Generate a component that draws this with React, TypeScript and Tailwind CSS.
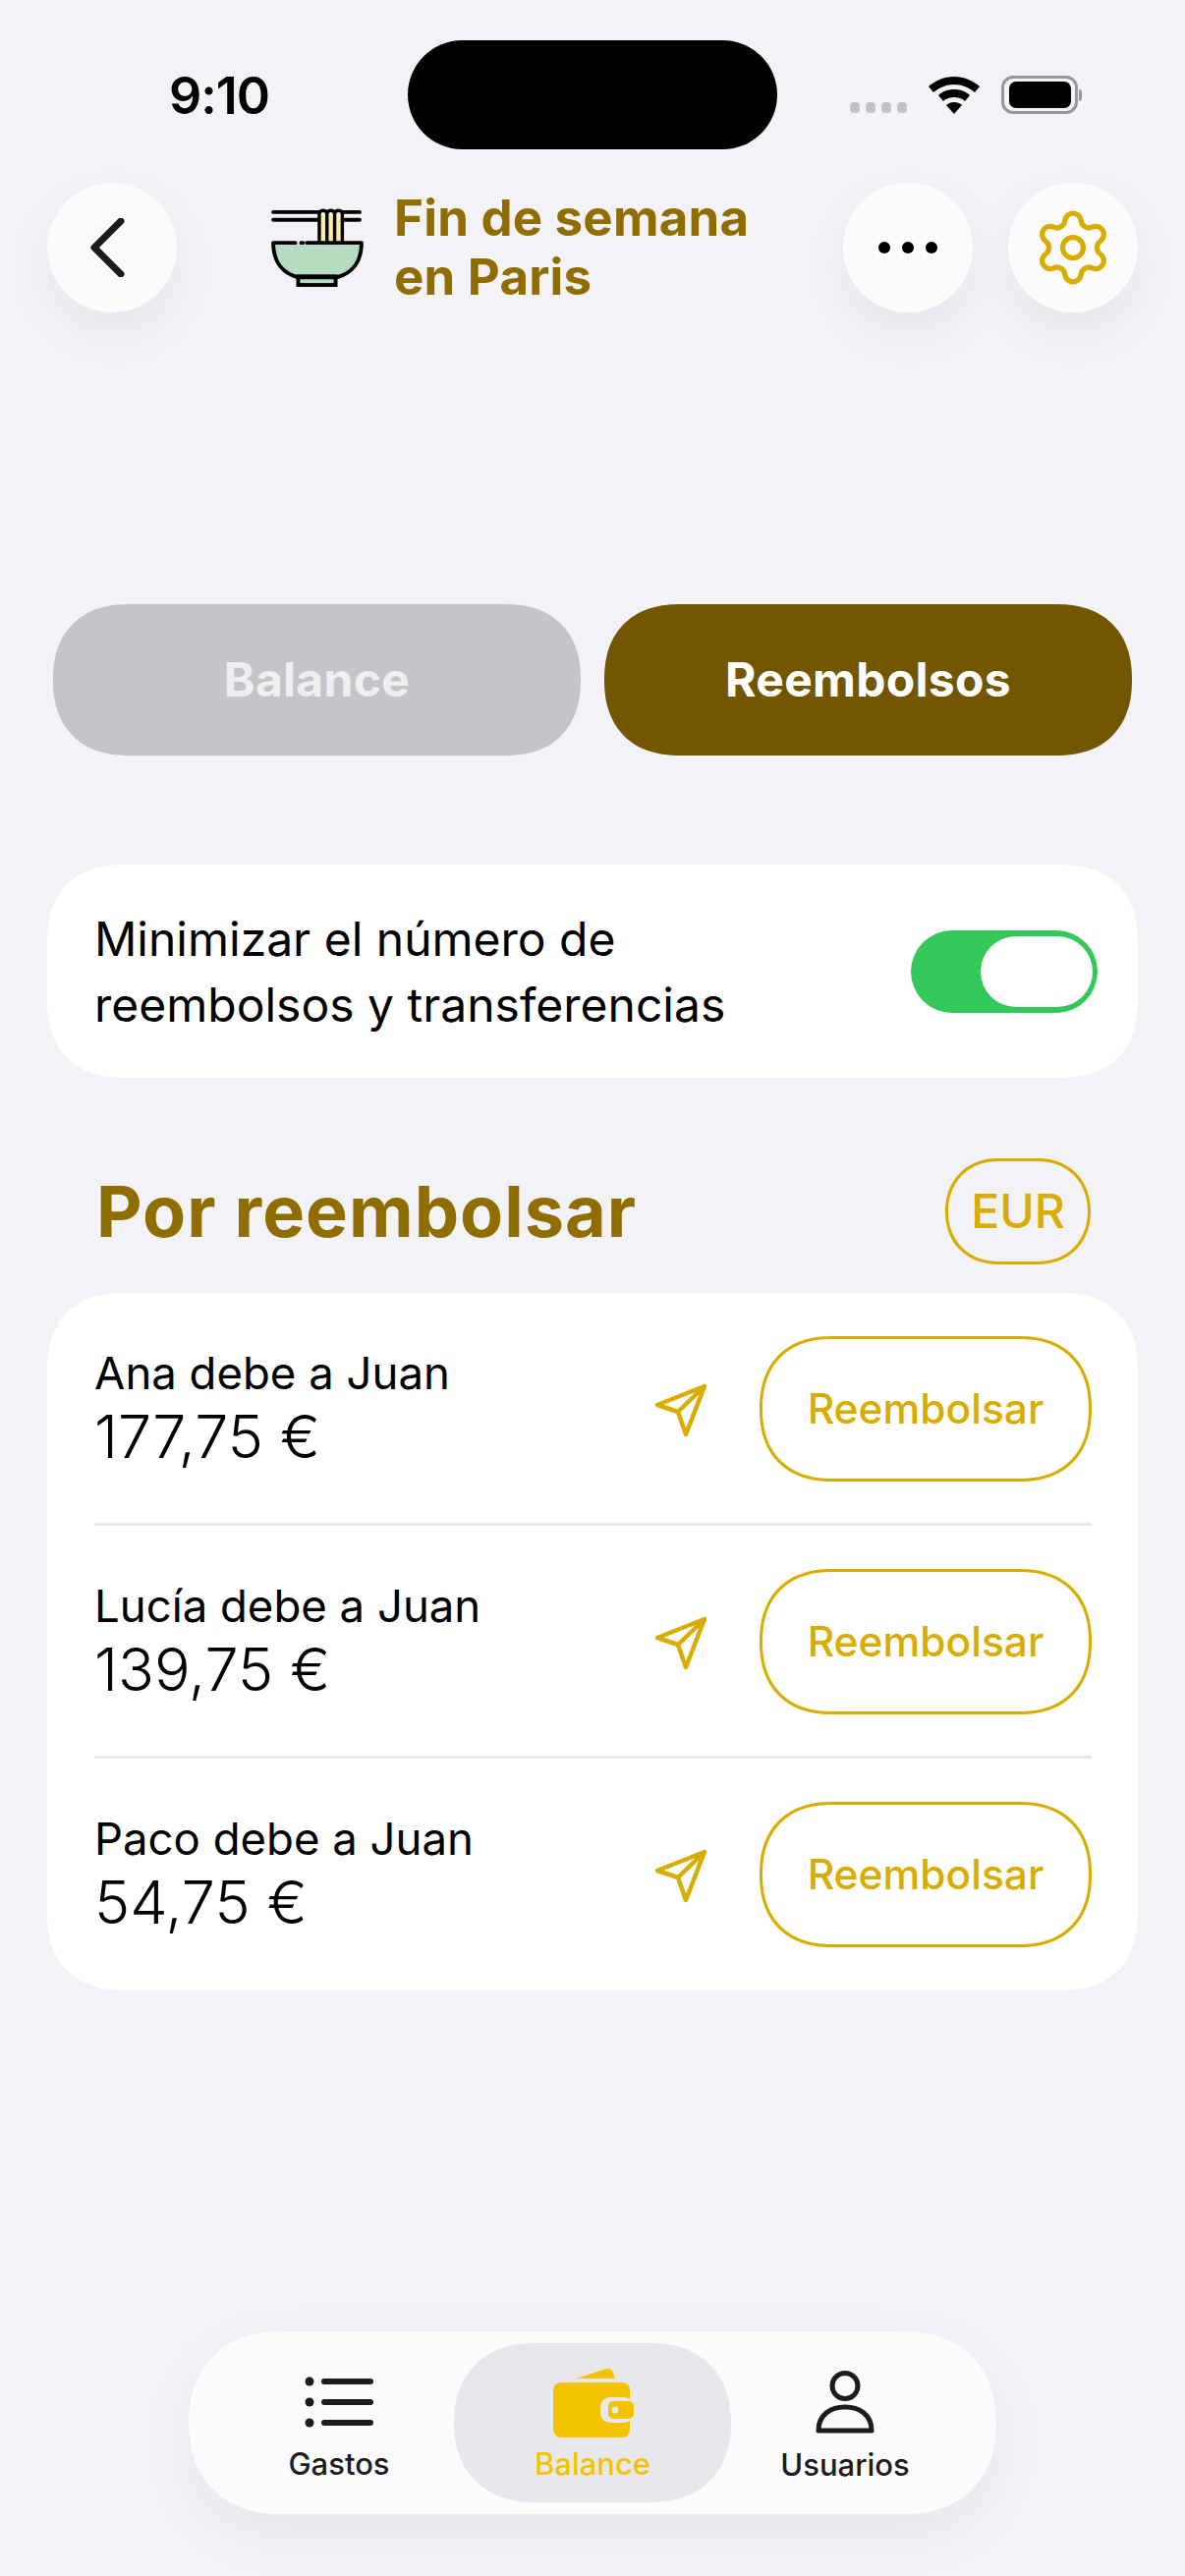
import React from "react";
import { Settings } from "lucide-react";

function Bowl() {
  return (
    <svg width="94" height="82" viewBox="0 0 96 84" className="block">
      <path d="M2 38h92c0 20-10 32-24 37H26C12 70 2 58 2 38z" fill="#b7dbc0" />
      <rect x="28" y="72" width="39" height="9" fill="#b7dbc0" stroke="#000" strokeWidth="4" />
      <path d="M2 5h47M2 13h47M74 5h18M74 13h18" stroke="#000" strokeWidth="4" strokeLinecap="round" />
      <path d="M50 8h24v29H50z" fill="#fbeda0" />
      <path d="M50 37V7c0-5 8-5 8 0v30M58 37V7c0-5 8-5 8 0v30M66 37V7c0-5 8-5 8 0v30" stroke="#000" strokeWidth="3.5" fill="none" />
      <path d="M2 37h23M31 37h2M37 37h57M2 37c0 20 10 32 26 36h40c16-4 26-16 26-36" stroke="#000" strokeWidth="4" fill="none" strokeLinecap="round" />
    </svg>
  );
}

function Send() {
  return (
    <svg width="56" height="56" viewBox="0 0 56 56" className="block mt-[3px]">
      <path d="M52 3 4 22l21 7 8 23L52 3zM25 29 52 3" fill="none" stroke="#d9ac00" strokeWidth="4.5" strokeLinejoin="round" strokeLinecap="round" />
    </svg>
  );
}

function Row({ name, amount, last }: { name: string; amount: string; last?: boolean }) {
  return (
    <div className={last ? "" : "border-b-[3px] border-[#e8e8ea] pb-[42px] mb-[44px]"}>
      <div className="flex items-center h-[148px]">
        <div className="flex-1 -mt-[2px]">
          <div className="text-[45.5px] leading-[58px] text-black">{name}</div>
          <div className="text-[61px] leading-[70px] font-light text-black">{amount}</div>
        </div>
        <div className="mr-[52px]">
          <Send />
        </div>
        <div className="w-[338px] h-[148px] rounded-[74px] [corner-shape:superellipse(1.2)] border-[3px] border-[#d9ac00] flex items-center justify-center text-[42.5px] font-medium text-[#d9ac00]">
          Reembolsar
        </div>
      </div>
    </div>
  );
}

export default function App() {
  return (
    <div className="w-[1206px] h-[2622px] bg-[#f2f2f7] flex flex-col overflow-hidden [font-family:Inter,sans-serif]">
      {/* status bar */}
      <div className="flex items-center h-[111px] mt-[41px] pl-[172px] pr-[105px]">
        <div className="w-[243px] text-[52px] font-semibold text-black leading-none tracking-[-1px] mt-[3px]">9:10</div>
        <div className="w-[376px] h-[111px] rounded-[56px] bg-black" />
        <div className="flex-1 flex items-center pl-[74px]">
          <div className="flex gap-[6px] mt-[26px]">
            <span className="w-[10px] h-[11px] rounded-[4px] bg-[#c2c2c6]" />
            <span className="w-[10px] h-[11px] rounded-[4px] bg-[#c2c2c6]" />
            <span className="w-[10px] h-[11px] rounded-[4px] bg-[#c2c2c6]" />
            <span className="w-[10px] h-[11px] rounded-[4px] bg-[#c2c2c6]" />
          </div>
          <svg width="52" height="38" viewBox="0 0 52 38" className="ml-[22px] block">
            <path d="M26 0C16 0 7 4 0 10l5 6c6-5 13-8 21-8s15 3 21 8l5-6C45 4 36 0 26 0z" fill="#000" />
            <path d="M26 13c-6 0-12 2-16 6l5 6c3-3 7-4 11-4s8 1 11 4l5-6c-4-4-10-6-16-6z" fill="#000" />
            <path d="M26 26c-3 0-6 1-8 3l8 9 8-9c-2-2-5-3-8-3z" fill="#000" />
          </svg>
          <div className="ml-[22px] flex items-center">
            <div className="w-[78px] h-[39px] rounded-[12px] border-[3px] border-[#98989c] flex items-center justify-center">
              <div className="w-[63px] h-[27px] rounded-[7px] bg-black" />
            </div>
            <div className="w-[3px] h-[12px] ml-[1px] rounded-r-[3px] bg-[#98989c]" />
          </div>
        </div>
      </div>

      {/* header */}
      <div className="flex items-center h-[132px] mt-[34px] pl-[48px] pr-[48px]">
        <div className="w-[132px] h-[132px] rounded-full bg-[#fbfbfe] shadow-[0_20px_50px_rgba(0,0,0,0.05)] flex items-center justify-center">
          <svg width="40" height="60" viewBox="0 0 40 60" className="block -ml-[8px]">
            <path d="M33 3 6 30l27 27" fill="none" stroke="#1c1c1e" strokeWidth="7" strokeLinecap="round" strokeLinejoin="round" />
          </svg>
        </div>
        <div className="ml-[96px] -mt-[1px] w-[96px]">
          <Bowl />
        </div>
        <div className="ml-[29px] flex-1 text-[51px] leading-[60px] font-bold tracking-[0.2px] text-[#8f6d00]">
          Fin de semana
          <br />
          en Paris
        </div>
        <div className="w-[132px] h-[132px] rounded-full bg-[#fbfbfe] shadow-[0_20px_50px_rgba(0,0,0,0.05)] flex items-center justify-center gap-[12px]">
          <span className="w-[12px] h-[12px] rounded-full bg-black" />
          <span className="w-[12px] h-[12px] rounded-full bg-black" />
          <span className="w-[12px] h-[12px] rounded-full bg-black" />
        </div>
        <div className="w-[132px] h-[132px] ml-[36px] rounded-full bg-[#fbfbfe] shadow-[0_20px_50px_rgba(0,0,0,0.05)] flex items-center justify-center">
          <Settings size={84} strokeWidth={1.5} color="#d9ac00" />
        </div>
      </div>

      {/* segmented */}
      <div className="flex gap-[24px] px-[54px] mt-[297px]">
        <div className="flex-1 h-[154px] rounded-[77px] [corner-shape:superellipse(1.2)] bg-[#c5c5c9] flex items-center justify-center text-[48px] tracking-[0.3px] font-bold text-[#efeff1]">
          Balance
        </div>
        <div className="flex-1 h-[154px] rounded-[77px] [corner-shape:superellipse(1.2)] bg-[#725700] flex items-center justify-center text-[48px] tracking-[0.3px] font-bold text-white">
          Reembolsos
        </div>
      </div>

      {/* toggle card */}
      <div className="mx-[48px] mt-[111px] h-[217px] rounded-[80px] [corner-shape:superellipse(1.25)] bg-white flex items-center pl-[48px] pr-[41px]">
        <div className="flex-1 text-[48px] leading-[67px] text-black">
          Minimizar el número de
          <br />
          reembolsos y transferencias
        </div>
        <div className="w-[190px] h-[84px] rounded-[42px] bg-[#34c759] flex items-center justify-end pr-[5px]">
          <div className="w-[114px] h-[72px] rounded-[36px] bg-white" />
        </div>
      </div>

      {/* section title */}
      <div className="flex items-center justify-between mt-[82px] pl-[98px] pr-[96px] h-[108px]">
        <div className="text-[72px] font-bold text-[#8f6d00] leading-none tracking-[1px]">Por reembolsar</div>
        <div className="w-[148px] h-[108px] rounded-[54px] [corner-shape:superellipse(1.1)] border-[3px] border-[#d9ac00] flex items-center justify-center text-[48px] font-medium text-[#d9ac00]">
          EUR
        </div>
      </div>

      {/* list */}
      <div className="mx-[48px] mt-[29px] rounded-[80px] [corner-shape:superellipse(1.25)] bg-white pt-[44px] pb-[44px] pl-[48px] pr-[47px]">
        <Row name="Ana debe a Juan" amount="177,75 €" />
        <Row name="Lucía debe a Juan" amount="139,75 €" />
        <Row name="Paco debe a Juan" amount="54,75 €" last />
      </div>

      {/* tab bar */}
      <div className="mt-auto mb-[63px] ml-[192px] w-[822px] h-[186px] rounded-[93px] [corner-shape:superellipse(1.15)] bg-[#fbfbfe] shadow-[0_20px_60px_rgba(0,0,0,0.05)] flex items-center pl-[39px]">
        <div className="w-[228px] mt-[13px] flex flex-col items-center">
          <svg width="70" height="52" viewBox="0 0 70 52" className="block">
            <circle cx="5" cy="5" r="4.5" fill="#1c1c1e" />
            <circle cx="5" cy="26" r="4.5" fill="#1c1c1e" />
            <circle cx="5" cy="47" r="4.5" fill="#1c1c1e" />
            <path d="M20 5h47M20 26h47M20 47h47" stroke="#1c1c1e" strokeWidth="6" strokeLinecap="round" />
          </svg>
          <div className="text-[31px] leading-[36px] mt-[19px] font-medium text-[#1c1c1e]">Gastos</div>
        </div>
        <div className="w-[282px] h-[162px] ml-[3px] rounded-[81px] [corner-shape:superellipse(1.15)] bg-[#e8e8ec] flex flex-col items-center pt-[26px] pl-[2px]">
          <svg width="82" height="70" viewBox="0 0 82 70" className="block">
            <path d="M23 10 54 0c3-1 6 1 7 4l2 6z" fill="#f4c300" />
            <rect x="0" y="14" width="78" height="56" rx="8" fill="#f4c300" />
            <rect x="48" y="29" width="34" height="26" rx="10" fill="#e8e8ec" />
            <rect x="56" y="33" width="26" height="18" rx="5" fill="#f4c300" />
            <circle cx="63" cy="42" r="3.5" fill="#e8e8ec" />
          </svg>
          <div className="text-[31px] leading-[36px] mt-[9px] -ml-[2px] font-medium text-[#f4c300]">Balance</div>
        </div>
        <div className="w-[232px] mt-[7px] flex flex-col items-center">
          <svg width="60" height="64" viewBox="0 0 60 64" className="block">
            <circle cx="30" cy="15.5" r="13" fill="none" stroke="#1c1c1e" strokeWidth="5" />
            <path d="M3 61c0-16 12-24 27-24s27 8 27 24z" fill="none" stroke="#1c1c1e" strokeWidth="5" strokeLinejoin="round" />
          </svg>
          <div className="text-[31px] leading-[36px] mt-[14px] font-medium text-[#1c1c1e]">Usuarios</div>
        </div>
      </div>
    </div>
  );
}
